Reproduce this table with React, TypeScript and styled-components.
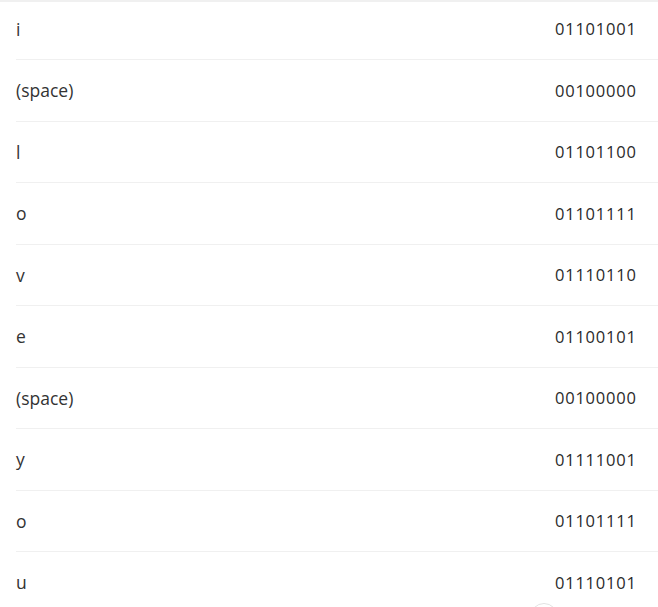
import React from "react";
import styled, { createGlobalStyle } from "styled-components";

const Global = createGlobalStyle`
  html, body { margin: 0; padding: 0; background: #fff; overflow: hidden; }
  body { font-family: "Open Sans", "Liberation Sans", sans-serif; color: #333; }
`;

const TopEdge = styled.div`
  position: fixed;
  top: 0;
  left: 0;
  right: 0;
  height: 2px;
  background: #f0f0f0;
  z-index: 2;
`;

const List = styled.ul`
  list-style: none;
  margin: -1.5px 0 0 16px;
  padding: 0;
`;

const Row = styled.li`
  display: flex;
  align-items: center;
  justify-content: space-between;
  height: 60.5px;
  padding-right: 22px;
  border-bottom: 1px solid #f0f0f0;
`;

const Char = styled.span`
  font-family: "Open Sans", sans-serif;
  font-size: 17.5px;
  color: #333;
`;

const Bits = styled.span`
  font-family: "Open Sans", sans-serif;
  font-variant-numeric: tabular-nums;
  font-size: 16.5px;
  letter-spacing: 0.8px;
  margin-right: -0.8px;
  color: #2a2a2a;
`;

const FloatButton = styled.div`
  position: fixed;
  left: 530px;
  top: 603px;
  width: 26px;
  height: 26px;
  border-radius: 50%;
  border: 1px solid #e2e2e2;
  background: #fff;
`;

const rows: [string, string][] = [
  ["i", "01101001"],
  ["(space)", "00100000"],
  ["l", "01101100"],
  ["o", "01101111"],
  ["v", "01110110"],
  ["e", "01100101"],
  ["(space)", "00100000"],
  ["y", "01111001"],
  ["o", "01101111"],
  ["u", "01110101"],
];

export default function App() {
  return (
    <>
      <Global />
      <TopEdge />
      <List>
        {rows.map(([c, b], i) => (
          <Row key={i}>
            <Char>{c}</Char>
            <Bits>{b}</Bits>
          </Row>
        ))}
      </List>
      <FloatButton />
    </>
  );
}
